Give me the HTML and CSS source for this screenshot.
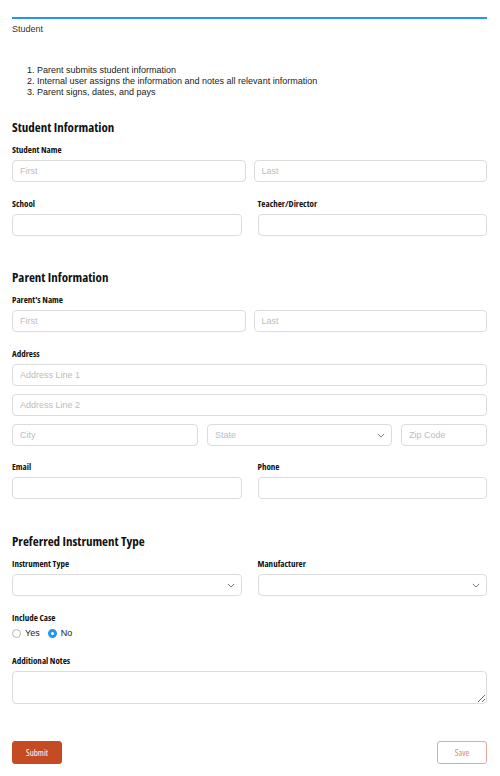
FILE: index.html
```html
<!DOCTYPE html>
<html lang="en">
<head>
<meta charset="utf-8">
<title>Student</title>
<link rel="stylesheet" href="styles.css">
</head>
<body>
<div class="page">
  <div class="topbar">Student</div>
  <ol class="steps">
    <li>Parent submits student information</li>
    <li>Internal user assigns the information and notes all relevant information</li>
    <li>Parent signs, dates, and pays</li>
  </ol>

  <h2 class="section-title first">Student Information</h2>
  <div class="field">
    <label class="label">Student Name</label>
    <div class="pair">
      <input class="input" placeholder="First">
      <input class="input" placeholder="Last">
    </div>
  </div>
  <div class="cols">
    <div class="field">
      <label class="label">School</label>
      <input class="input">
    </div>
    <div class="field">
      <label class="label">Teacher/Director</label>
      <input class="input">
    </div>
  </div>

  <h2 class="section-title">Parent Information</h2>
  <div class="field">
    <label class="label">Parent's Name</label>
    <div class="pair">
      <input class="input" placeholder="First">
      <input class="input" placeholder="Last">
    </div>
  </div>
  <div class="field">
    <label class="label">Address</label>
    <div class="stack">
      <input class="input" placeholder="Address Line 1">
      <input class="input" placeholder="Address Line 2">
      <div class="city-row">
        <input class="input" placeholder="City">
        <div class="select"><span class="ph">State</span><svg class="chev" viewBox="0 0 10 6" width="8" height="5"><path d="M1 1l4 4 4-4" fill="none" stroke="#555" stroke-width="1"/></svg></div>
        <input class="input" placeholder="Zip Code">
      </div>
    </div>
  </div>
  <div class="cols email-row">
    <div class="field">
      <label class="label">Email</label>
      <input class="input">
    </div>
    <div class="field">
      <label class="label">Phone</label>
      <input class="input">
    </div>
  </div>

  <h2 class="section-title instrument">Preferred Instrument Type</h2>
  <div class="cols first-row">
    <div class="field">
      <label class="label">Instrument Type</label>
      <div class="select"><span class="ph"></span><svg class="chev" viewBox="0 0 10 6" width="8" height="5"><path d="M1 1l4 4 4-4" fill="none" stroke="#555" stroke-width="1"/></svg></div>
    </div>
    <div class="field">
      <label class="label">Manufacturer</label>
      <div class="select"><span class="ph"></span><svg class="chev" viewBox="0 0 10 6" width="8" height="5"><path d="M1 1l4 4 4-4" fill="none" stroke="#555" stroke-width="1"/></svg></div>
    </div>
  </div>
  <div class="field">
    <label class="label">Include Case</label>
    <div class="radios">
      <span class="radio"><span class="dot"></span>Yes</span>
      <span class="radio"><span class="dot on"></span>No</span>
    </div>
  </div>
  <div class="field">
    <label class="label">Additional Notes</label>
    <textarea class="textarea"></textarea>
  </div>

  <div class="actions">
    <button class="btn primary">Submit</button>
    <button class="btn outline">Save</button>
  </div>
</div>
</body>
</html>
```

FILE: styles.css
```css
* { box-sizing: border-box; }
html, body { margin: 0; padding: 0; background: #fff; }
body {
  font-family: "Liberation Sans", Arial, sans-serif;
  font-size: 9px;
  color: #222;
}
.page {
  padding: 17px 13px 20px 12px;
}
.topbar {
  border-top: 2px solid #2196f3;
  padding-top: 5px;
  line-height: 10px;
  font-size: 9px;
  color: #333;
}
.steps {
  margin: 31px 0 0 0;
  padding-left: 25px;
  line-height: 11px;
  font-size: 9px;
  color: #222;
}
.section-title {
  font-family: "Open Sans", "DejaVu Sans", sans-serif;
  font-stretch: 75%;
  font-weight: 700;
  font-size: 13px;
  line-height: 16px;
  height: 16px;
  margin: 33px 0 0 0;
  color: #111;
}
.section-title.first { margin-top: 21px; }
.section-title.instrument { margin-top: 34px; }
.label {
  display: block;
  font-family: "Open Sans", "DejaVu Sans", sans-serif;
  font-stretch: 75%;
  font-weight: 700;
  font-size: 9px;
  line-height: 12px;
  height: 12px;
  color: #111;
  margin-bottom: 4px;
}
.field { margin-top: 16px; }
.email-row .field { margin-top: 15px; }
.section-title + .field,
.section-title + .cols .field { margin-top: 9px; }
.cols {
  display: grid;
  grid-template-columns: 1fr 1fr;
  column-gap: 16px;
}
.pair {
  display: grid;
  grid-template-columns: 1fr 1fr;
  column-gap: 8px;
}
.stack {
  display: flex;
  flex-direction: column;
  gap: 8px;
}
.city-row {
  display: grid;
  grid-template-columns: 186px 1fr 86px;
  column-gap: 9px;
}
.input, .select, .textarea {
  display: block;
  width: 100%;
  height: 22px;
  border: 1px solid #dcdcdc;
  border-radius: 4px;
  background: #fff;
  font-family: "Liberation Sans", Arial, sans-serif;
  font-size: 9px;
  color: #333;
  padding: 0 7px;
  margin: 0;
  outline: none;
}
.input::placeholder { color: #bdbdbd; }
.select {
  display: flex;
  align-items: center;
  justify-content: space-between;
  padding-right: 6px;
}
.select .ph { color: #bdbdbd; }
.chev { display: block; }
.textarea {
  height: 33px;
  resize: vertical;
  padding: 5px 7px;
  vertical-align: top;
}
.radios {
  display: flex;
  gap: 8px;
  font-family: "Liberation Sans", Arial, sans-serif;
  font-size: 9px;
  line-height: 12px;
  height: 12px;
  margin-top: -1px;
  color: #222;
}
.radio {
  display: inline-flex;
  align-items: center;
  gap: 4px;
}
.dot {
  width: 9px;
  height: 9px;
  border-radius: 50%;
  border: 1px solid #b5b5b5;
  background: #fff;
  display: inline-block;
}
.dot.on {
  border: 3px solid #2196f3;
  background: #fff;
}
.actions {
  display: flex;
  justify-content: space-between;
  margin-top: 37px;
}
.btn {
  width: 50px;
  height: 23px;
  border-radius: 3px;
  font-family: "Open Sans", "DejaVu Sans", sans-serif;
  font-stretch: 75%;
  font-size: 9px;
  padding: 0;
  cursor: pointer;
}
.btn.primary {
  background: #c44b22;
  border: 1px solid #c44b22;
  color: #fff;
}
.btn.outline {
  background: #fff;
  border: 1px solid #e5a898;
  color: #d98a72;
}
```
